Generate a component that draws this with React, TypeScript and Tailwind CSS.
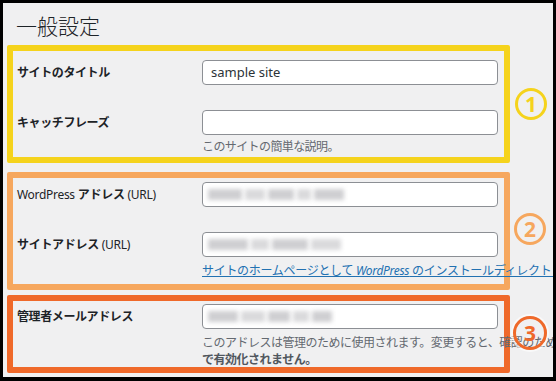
const font = "font-['Noto_Sans','Noto_Sans_CJK_JP',sans-serif]"

function Blur({ widths }: { widths: number[] }) {
  return (
    <div className="flex items-center gap-[3px] pl-[5px]">
      {widths.map((w, i) => (
        <div
          key={i}
          className={`h-[11px] blur-[2px] ${i % 2 === 0 ? 'bg-[#cfcfd2]' : 'bg-[#dadadc]'}`}
          style={{ width: w }}
        />
      ))}
    </div>
  )
}

function Input({ children }: { children?: React.ReactNode }) {
  return (
    <div className="flex h-[25px] w-[296px] items-center rounded-[4px] border border-[#8c8f94] bg-white text-[13px] text-[#2c3338]">
      {children}
    </div>
  )
}

function Label({ children }: { children: React.ReactNode }) {
  return (
    <div className="flex h-[25px] items-center pl-[4px] text-[12px] font-bold tracking-[-0.4px] text-[#1d2327]">
      {children}
    </div>
  )
}

function Circle({ n, color, className }: { n: string; color: string; className: string }) {
  return (
    <div
      className={`absolute flex items-center justify-center rounded-full border-[3px] text-[21px] font-bold leading-none ${color} ${className}`}
    >
      {n}
    </div>
  )
}

export default function App() {
  return (
    <div className={`h-[381px] w-[556px] bg-black pb-[4px] pl-[3px] pr-[3px] pt-[3px] ${font}`}>
      <div className="relative h-full overflow-hidden bg-[#f0f0f1]">
        <h1 className="flex h-[42px] items-center pl-[13px] pt-[6px] text-[21px] font-light text-[#1d2327]">一般設定</h1>

        <div className="ml-[4px] h-[118px] w-[503px] rounded-[2px] border-[6px] border-[#f5d31c] pt-[9px]">
          <div className="grid grid-cols-[189px_296px]">
            <Label>サイトのタイトル</Label>
            <Input>
              <span className="pl-[8px]">sample site</span>
            </Input>
            <div className="col-span-2 h-[25px]" />
            <Label>キャッチフレーズ</Label>
            <Input />
            <div />
            <p className="mt-[4px] text-[12px] leading-[16px] tracking-[-0.6px] text-[#646970]">このサイトの簡単な説明。</p>
          </div>
        </div>

        <div className="ml-[4px] mt-[9px] h-[118px] w-[503px] rounded-[2px] border-[6px] border-[#f6a75e] pt-[4px]">
          <div className="grid grid-cols-[189px_296px]">
            <div className="flex h-[25px] items-center pl-[4px] text-[12px] tracking-[-0.3px] text-[#1d2327]">
              WordPress <b className="ml-[3px]">アドレス</b>&nbsp;(URL)
            </div>
            <Input>
              <Blur widths={[34, 20, 26, 14, 30]} />
            </Input>
            <div className="col-span-2 h-[25px]" />
            <div className="flex h-[25px] items-center pl-[4px] text-[12px] tracking-[-0.3px] text-[#1d2327]">
              <b>サイトアドレス</b>&nbsp;(URL)
            </div>
            <Input>
              <Blur widths={[40, 18, 36, 30]} />
            </Input>
            <div />
            <p className="mt-[6px] whitespace-nowrap text-[12px] leading-[16px] tracking-[-0.3px] text-[#2271b1] underline">
              サイトのホームページとして <i>WordPress</i> のインストールディレクトリとは異なる場所を設定する場合は、ここにアドレスを入力してください。
            </p>
          </div>
        </div>

        <div className="ml-[4px] mt-[5px] h-[78px] w-[503px] rounded-[2px] border-[6px] border-[#ef692a] pt-[3px]">
          <div className="grid grid-cols-[189px_296px]">
            <Label>管理者メールアドレス</Label>
            <Input>
              <Blur widths={[30, 24, 22, 16, 20]} />
            </Input>
            <div />
            <p className="mt-[5px] whitespace-nowrap text-[12px] leading-[17px] tracking-[-0.5px] text-[#646970]">
              このアドレスは管理のために使用されます。変更すると、確認のため新しいアドレスにメールを送信します。
              <b className="text-[#50575e]">新しいアドレスは確認が完了するま</b>
              <br />
              <b className="text-[#50575e]">で有効化されません。</b>
            </p>
          </div>
        </div>

        <Circle n="1" color="border-[#f5d31c] text-[#f5d31c]" className="left-[512px] top-[85px] h-[32px] w-[32px]" />
        <Circle n="2" color="border-[#f6a75e] text-[#f6a75e]" className="left-[511px] top-[210px] h-[32px] w-[32px]" />
        <Circle
          n="3"
          color="border-[#ef692a] text-[#ef692a] shadow-[0_0_0_2px_rgba(255,255,255,0.6)]"
          className="left-[510px] top-[313px] h-[34px] w-[34px]"
        />
      </div>
    </div>
  )
}
